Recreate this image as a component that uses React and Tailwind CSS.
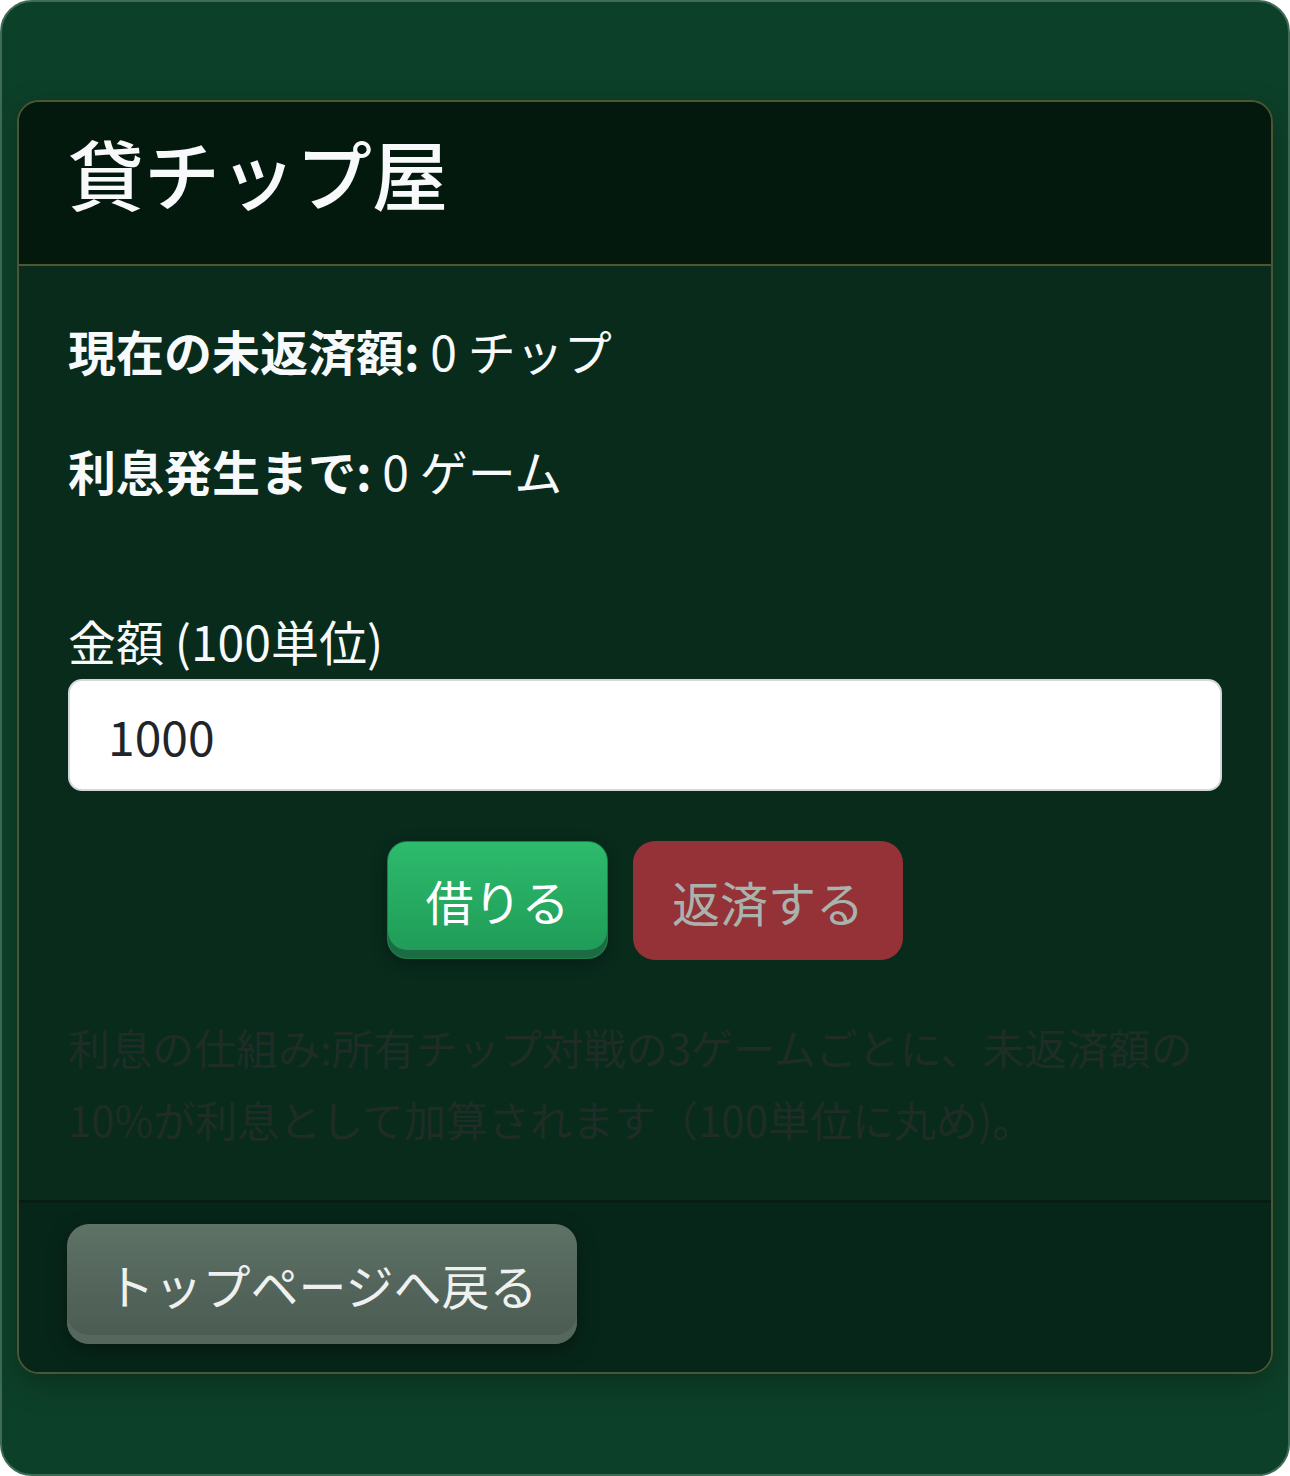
import { useState } from 'react'

const FONT = "font-['Noto_Sans_CJK_JP','Noto_Sans',sans-serif]"

function App() {
  const [amount, setAmount] = useState('1000')

  return (
    <div className={`min-h-[1476px] w-[1290px] bg-[#0d4029] border-2 border-[#3f6b57] rounded-[32px] px-[15px] py-[98px] ${FONT}`}>
      <div className="rounded-[22px] border-2 border-[#4c5631] bg-[#082b1c] overflow-hidden shadow-[0_10px_30px_rgba(0,0,0,0.25)]">
        {/* Header */}
        <div className="bg-[#04190d] border-b-2 border-[#4c5631] px-[49px] pt-[24px] pb-[46px]">
          <h1 className="text-[76px] leading-[92px] font-medium text-[#f8f9fa]">貸チップ屋</h1>
        </div>

        {/* Body */}
        <div className="px-[49px] pt-[48px] pb-[45px] text-[#f8f9fa]">
          <p className="text-[48px] leading-[72px] mb-[48px]">
            <span className="font-bold">現在の未返済額:</span> 0 チップ
          </p>
          <p className="text-[48px] leading-[72px] mb-[48px]">
            <span className="font-bold">利息発生まで:</span> 0 ゲーム
          </p>

          <div className="mt-[98px]">
            <label className="block text-[48px] leading-[72px] mb-[3px]">金額 (100単位)</label>
            <input
              type="text"
              value={amount}
              onChange={e => setAmount(e.target.value)}
              className="w-full h-[112px] rounded-[14px] border-2 border-[#d4d8dd] bg-white px-[38px] text-[48px] text-[#212529] outline-none"
            />
          </div>

          <div className="flex justify-center gap-[25px] mt-[50px]">
            <button className="w-[221px] h-[118px] rounded-[20px] border border-[#1f7d4c] bg-gradient-to-b from-[#2dbb6d] to-[#1f9a57] text-[48px] text-white shadow-[inset_0_-8px_0_#1b6b43,0_4px_16px_rgba(0,0,0,0.3)]">
              借りる
            </button>
            <button className="w-[270px] h-[119px] rounded-[22px] bg-[#943237] text-[48px] text-[#a9b2ac]">
              返済する
            </button>
          </div>

          <p className="mt-[51px] text-[42px] leading-[72px] text-[#1f2d26]">
            利息の仕組み:所有チップ対戦の3ゲームごとに、未返済額の10%が利息として加算されます（100単位に丸め)。
          </p>
        </div>

        {/* Footer */}
        <div className="bg-[#07261a] border-t-[3px] border-[#051d12] px-[48px] pt-[21px] pb-[28px]">
          <button className="w-[510px] h-[120px] rounded-[22px] bg-gradient-to-b from-[#5e7266] to-[#4a5a51] text-[48px] text-[#eef1ef] shadow-[inset_0_-9px_0_#56675e,0_6px_20px_rgba(0,0,0,0.35)]">
            トップページへ戻る
          </button>
        </div>
      </div>
    </div>
  )
}

export default App
